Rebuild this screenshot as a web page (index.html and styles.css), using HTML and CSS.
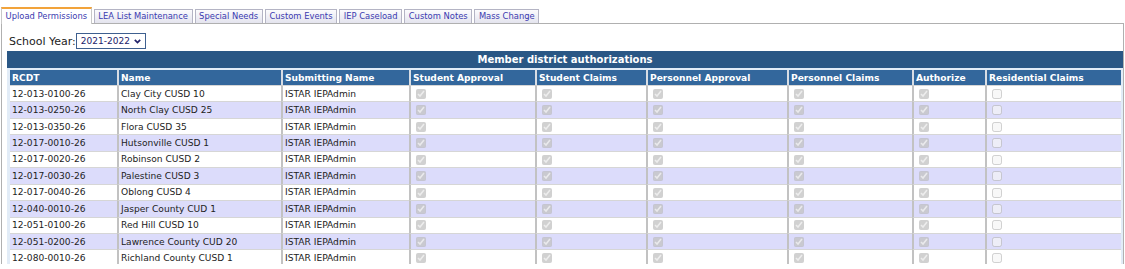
FILE: index.html
```html
<!DOCTYPE html>
<html lang="en">
<head>
    <meta charset="UTF-8">
    <title>Upload Permissions</title>
    <link rel="stylesheet" href="styles.css">
</head>
<body>
    <div class="tabs">
        <ul class="tab-list">
            <li class="tab active">Upload Permissions</li>
            <li class="tab">LEA List Maintenance</li>
            <li class="tab">Special Needs</li>
            <li class="tab">Custom Events</li>
            <li class="tab">IEP Caseload</li>
            <li class="tab">Custom Notes</li>
            <li class="tab">Mass Change</li>
        </ul>

        <div class="panel">
            <!-- School year picker -->
            <div class="year-row">
                <label for="schoolYear">School Year:</label>
                <span class="select-wrap">
                    <select id="schoolYear">
                        <option>2021-2022</option>
                        <option>2020-2021</option>
                    </select>
                    <svg class="chevron" width="7" height="5" viewBox="0 0 7 5"><path d="M0.8 0.8 L3.5 3.6 L6.2 0.8" fill="none" stroke="#22226a" stroke-width="1.7"/></svg>
                </span>
            </div>

            <!-- Authorizations grid -->
            <div class="auth-box">
                <div class="auth-title">Member district authorizations</div>
                <div class="auth-body">
                    <table class="auth-table">
                        <thead>
                            <tr>
                                <th class="c-rcdt">RCDT</th>
                                <th class="c-name">Name</th>
                                <th class="c-sub">Submitting Name</th>
                                <th class="c-sa">Student Approval</th>
                                <th class="c-sc">Student Claims</th>
                                <th class="c-pa">Personnel Approval</th>
                                <th class="c-pc">Personnel Claims</th>
                                <th class="c-au">Authorize</th>
                                <th class="c-rc">Residential Claims</th>
                            </tr>
                        </thead>
                        <tbody id="rows"></tbody>
                    </table>
                </div>
            </div>
        </div>
    </div>

    <script>
        const districts = [
            ["12-013-0100-26", "Clay City CUSD 10"],
            ["12-013-0250-26", "North Clay CUSD 25"],
            ["12-013-0350-26", "Flora CUSD 35"],
            ["12-017-0010-26", "Hutsonville CUSD 1"],
            ["12-017-0020-26", "Robinson CUSD 2"],
            ["12-017-0030-26", "Palestine CUSD 3"],
            ["12-017-0040-26", "Oblong CUSD 4"],
            ["12-040-0010-26", "Jasper County CUD 1"],
            ["12-051-0100-26", "Red Hill CUSD 10"],
            ["12-051-0200-26", "Lawrence County CUD 20"],
            ["12-080-0010-26", "Richland County CUSD 1"]
        ];

        const tbody = document.getElementById("rows");
        districts.forEach(function(d) {
            const tr = document.createElement("tr");
            let html = "<td>" + d[0] + "</td><td>" + d[1] + "</td><td>ISTAR IEPAdmin</td>";
            // five checked flags, residential claims unchecked
            for (let i = 0; i < 5; i++) {
                html += '<td><input type="checkbox" checked disabled></td>';
            }
            html += '<td><input type="checkbox" disabled></td>';
            tr.innerHTML = html;
            tbody.appendChild(tr);
        });
    </script>
</body>
</html>
```

FILE: styles.css
```css
body {
    margin: 0;
    padding: 7px 1px 0 1px;
    font-family: "DejaVu Sans", Verdana, sans-serif;
    color: #222;
    background: #fff;
}
.tab-list {
    display: flex;
    align-items: flex-end;
    gap: 2px;
    list-style: none;
    margin: 0;
    padding: 0;
    position: relative;
    z-index: 1;
}
.tab {
    font-size: 8.4px;
    color: #3a3ab0;
    height: 13px;
    line-height: 13px;
    padding: 0 3.6px;
    border: 1px solid #b4b4c4;
    border-bottom: none;
    background: linear-gradient(#fbfbfd, #e4e4ee);
}
.tab.active {
    height: 14px;
    line-height: 15px;
    background: #fff;
    border-top: 2px solid #f2a33a;
    border-left-color: #c8c8c8;
    border-right-color: #c8c8c8;
    margin-bottom: -1px;
    padding-bottom: 1px;
}
.panel {
    border: 1px solid #b0b0b0;
    border-bottom: none;
    padding: 0 0 0 5px;
    height: 240px;
}
.year-row {
    display: flex;
    align-items: center;
    padding: 9px 0 0 2px;
    height: 16px;
}
.year-row label {
    font-size: 11px;
    color: #222;
}
.select-wrap {
    position: relative;
    display: flex;
    height: 16px;
    margin-left: 0;
}
.select-wrap select {
    appearance: none;
    -webkit-appearance: none;
    font-family: "DejaVu Sans", Verdana, sans-serif;
    font-size: 9px;
    color: #22226a;
    height: 16px;
    width: 70px;
    padding: 0 0 0 4px;
    border: 1px solid #3e5f8f;
    border-radius: 0;
    background: #fff;
}
.chevron {
    position: absolute;
    right: 5px;
    top: 6px;
    pointer-events: none;
}
.auth-box {
    margin-top: 2px;
}
.auth-title {
    background: #2a5785;
    color: #fff;
    font-weight: bold;
    font-size: 10px;
    text-align: center;
    height: 17px;
    line-height: 18px;
}
.auth-body {
    background: #e2ecf7;
    padding: 2px 1px 4px 3px;
}
.auth-table {
    width: 1111px;
    table-layout: fixed;
    border-collapse: separate;
    border-spacing: 0;
    font-size: 9.1px;
}
.auth-table th,
.auth-table td {
    box-sizing: border-box;
    padding: 0 0 0 2px;
    text-align: left;
    white-space: nowrap;
    overflow: hidden;
    border-left: 2px solid #c2c2c2;
}
.auth-table th:first-child,
.auth-table td:first-child {
    border-left: none;
}
.auth-table th {
    background: #33679c;
    color: #fff;
    font-weight: bold;
    height: 15px;
    border-left-color: #d8dde4;
}
.auth-table td {
    height: 16.45px;
    border-top: 1px solid #d6d6d6;
    background: #fff;
    color: #222;
}
.auth-table tbody tr:nth-child(even) td {
    background: #dcdcfb;
}
.auth-table input[type="checkbox"] {
    width: 10px;
    height: 10px;
    margin: 0 0 0 3px;
    vertical-align: middle;
}
.c-rcdt { width: 107px; }
.c-name { width: 164px; }
.c-sub { width: 128px; }
.c-sa { width: 126px; }
.c-sc { width: 111px; }
.c-pa { width: 141px; }
.c-pc { width: 125px; }
.c-au { width: 73px; }
.c-rc { width: 136px; }
```
